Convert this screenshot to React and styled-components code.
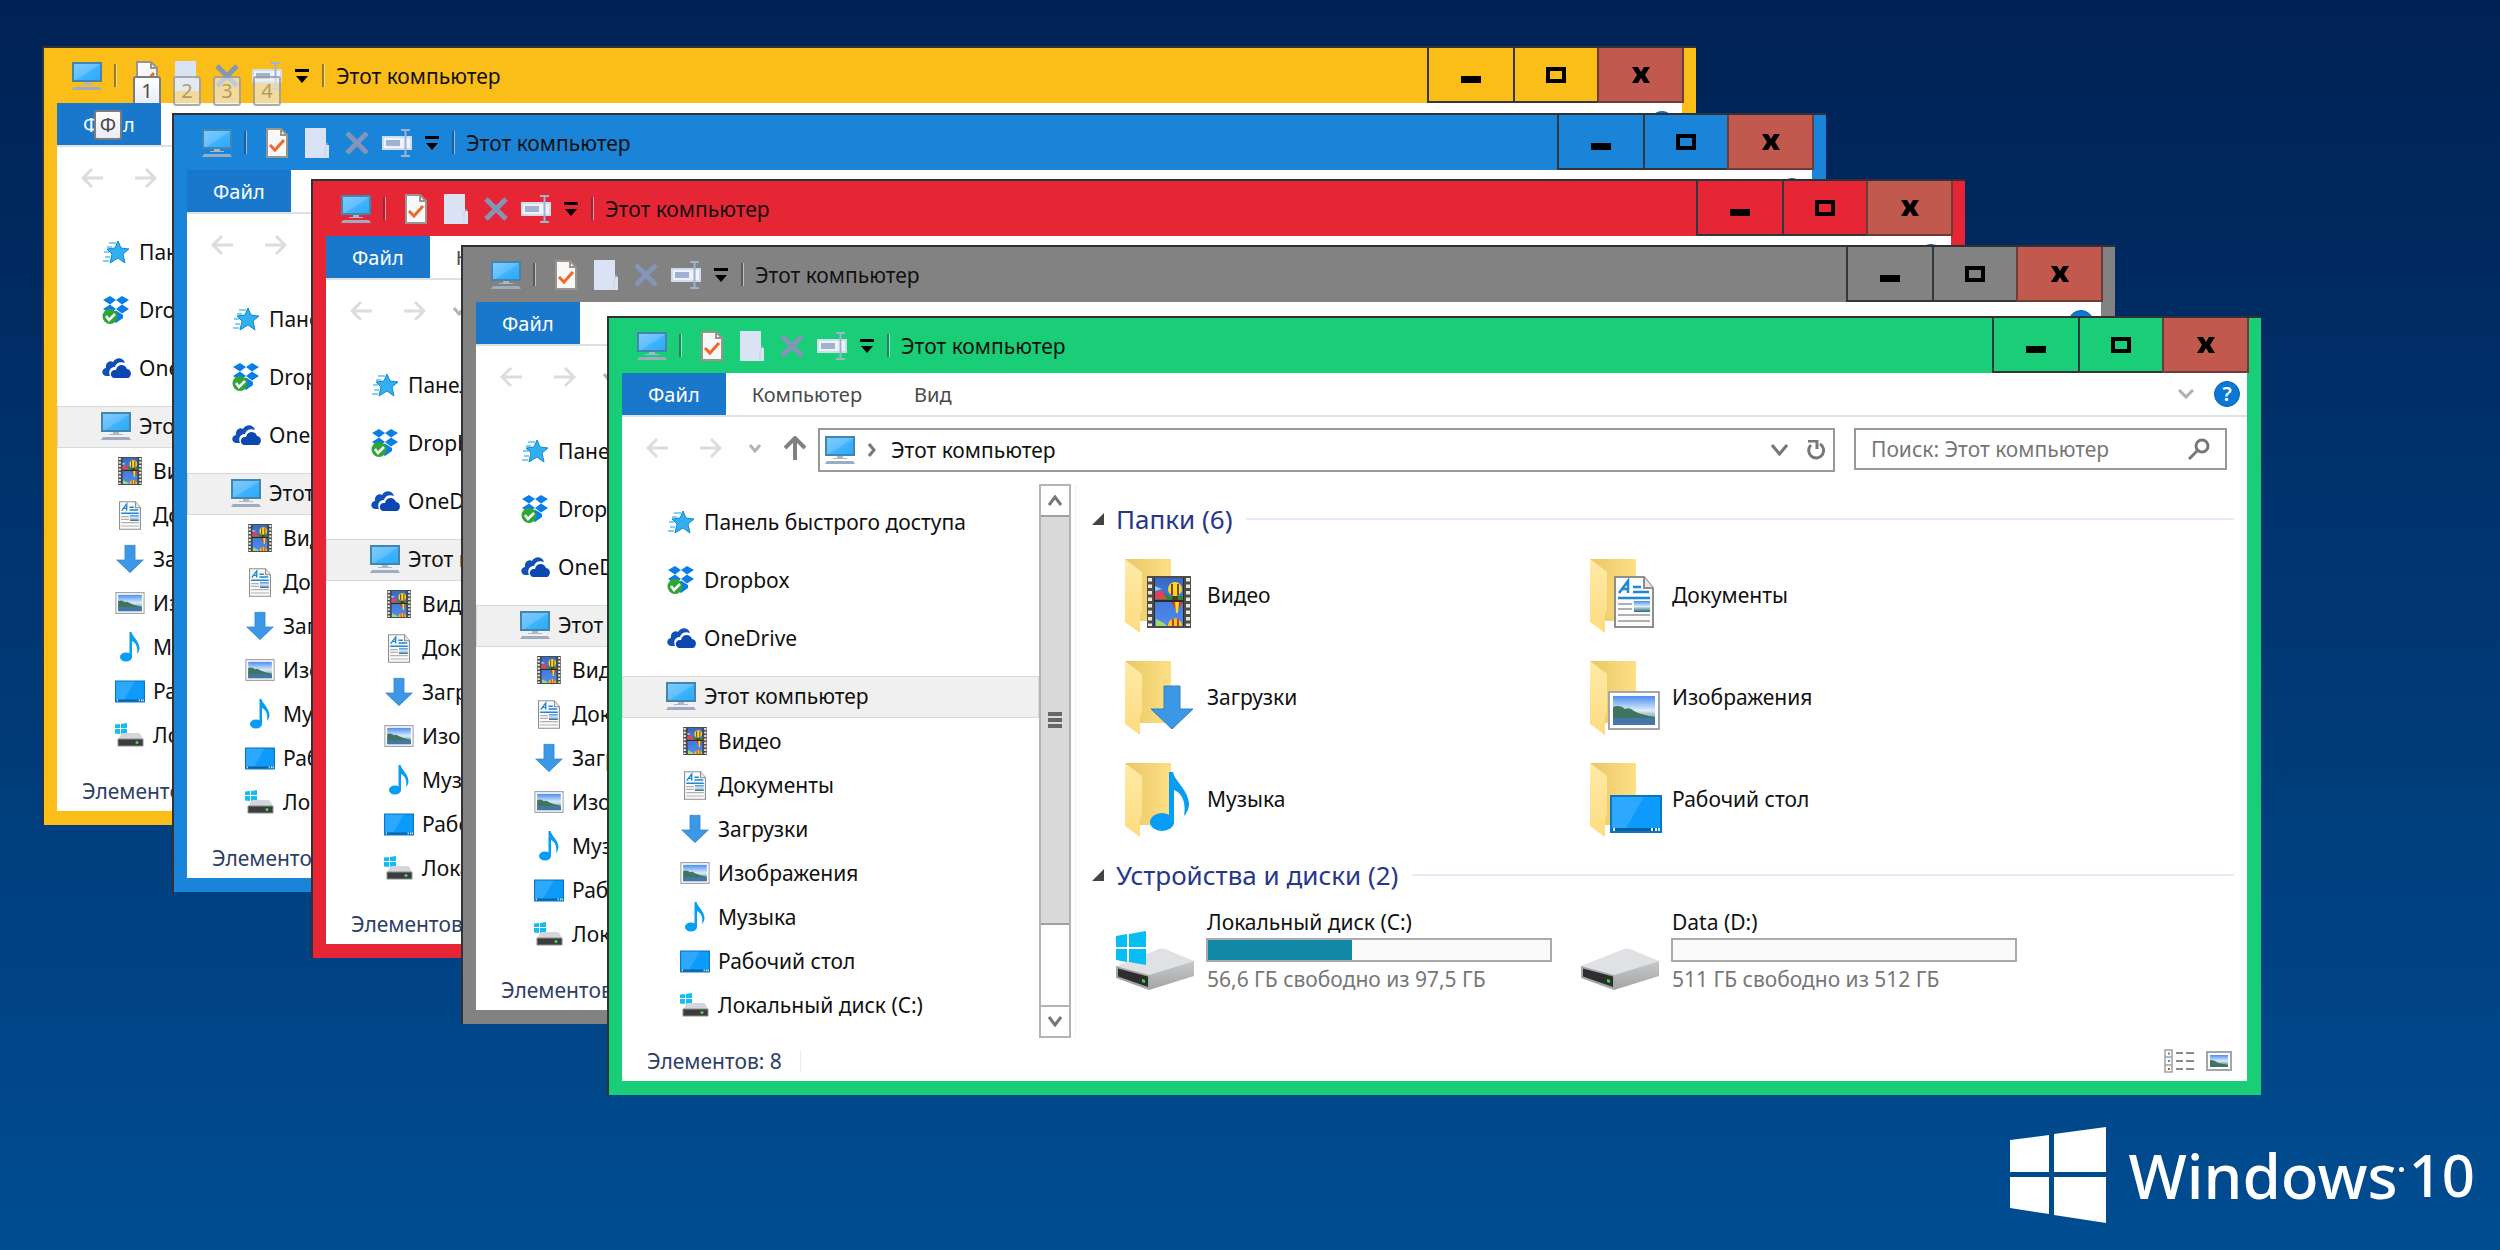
import styled, { createGlobalStyle, css } from "styled-components";

const GlobalStyle = createGlobalStyle`
  * {
    box-sizing: border-box;
  }
  body {
    margin: 0;
    background: #00235a;
  }
  button,
  input {
    font: inherit;
    color: inherit;
    margin: 0;
    padding: 0;
    border: 0;
    background: none;
  }
  a {
    color: inherit;
    text-decoration: none;
  }
  ul {
    margin: 0;
    padding: 0;
    list-style: none;
  }
  svg {
    display: block;
    flex: none;
  }
`;

const Desktop = styled.main`
  position: relative;
  min-height: 100vh;
  overflow: hidden;
  display: flex;
  flex-direction: column;
  justify-content: flex-end;
  align-items: flex-end;
  padding: 0 25px 27px;
  background: linear-gradient(#002154, #004d92);
  font-family: "Noto Sans", "Open Sans", sans-serif;
  font-size: 21px;
  line-height: 28px;
  color: #111111;
`;

const Defs = styled.svg`
  position: absolute;
`;

const Brand = styled.div`
  display: flex;
  align-items: center;
  color: #ffffff;
`;

const BrandName = styled.span`
  position: relative;
  margin-left: 22px;
  font-size: 62px;
  line-height: 84px;
  font-weight: 500;
  &::after {
    content: "";
    position: absolute;
    right: -6px;
    top: 34px;
    width: 5px;
    height: 5px;
    border-radius: 50%;
    background: #ffffff;
  }
`;

const BrandNumber = styled.span`
  margin-left: 11px;
  font-size: 58px;
  line-height: 84px;
  font-weight: 500;
`;

/* windows */

const WindowFrame = styled.section`
  position: absolute;
  left: ${(p) => p.$left}px;
  right: ${(p) => p.$right}px;
  top: ${(p) => p.$top}px;
  padding: 0 14px 14px 13px;
  border-top: 2px solid #2f3136;
  border-left: 2px solid #2f3136;
  background: ${(p) => p.$color};
`;

const TitleBar = styled.header`
  display: flex;
  align-items: center;
  height: 55px;
  padding-left: 15px;
`;

const Separator = styled.span`
  width: 3px;
  height: 23px;
  margin: 0 ${(p) => (p.$end ? 11 : 10)}px 0 ${(p) => (p.$end ? 5 : 12)}px;
  border-left: 2px solid rgba(50, 50, 70, 0.5);
  border-right: 1px solid rgba(255, 255, 255, 0.5);
`;

const QuickButton = styled.button`
  position: relative;
  display: flex;
  justify-content: center;
  align-items: center;
  width: ${(p) => (p.$small ? 30 : 40)}px;
  height: 32px;
`;

const KeyTip = styled.kbd`
  position: absolute;
  left: ${(p) => p.$left}px;
  top: ${(p) => p.$top}px;
  width: 28px;
  height: 30px;
  border: 2px solid #7c7c80;
  border-radius: 3px;
  background: linear-gradient(#ffffff, #e6ebf5);
  font-family: inherit;
  font-size: 20px;
  line-height: 26px;
  text-align: center;
  color: #4a4a4a;
  ${(p) =>
    p.$dim &&
    css`
      border-color: rgba(124, 124, 128, 0.6);
      background: rgba(235, 238, 245, 0.6);
      color: #b59a5c;
    `}
`;

const Title = styled.h1`
  flex: 1;
  margin: 0;
  font-size: 21px;
  font-weight: 400;
`;

const CaptionButtons = styled.div`
  display: flex;
  align-self: stretch;
  margin-right: -2px;
`;

const CaptionButton = styled.button`
  display: flex;
  justify-content: center;
  align-items: center;
  width: ${(p) => p.$width}px;
  border: 0 solid #33363a;
  border-width: 0 0 2px 2px;
  background: transparent;
  ${(p) =>
    p.$close &&
    css`
      border-color: #6d3b3a;
      border-right-width: 2px;
      background: #c1594f;
    `}
`;

const Client = styled.div`
  background: #ffffff;
`;

const TabRow = styled.div`
  display: flex;
  align-items: center;
  height: 44px;
  padding-right: 7px;
  border-bottom: 2px solid #dfe0e2;
`;

const Tab = styled.button`
  position: relative;
  height: 42px;
  padding: 2px 26px 0;
  font-size: 20px;
  line-height: 28px;
  color: #4a4a4a;
  ${(p) =>
    p.$file &&
    css`
      color: #ffffff;
      background: #1a78cc;
    `}
`;

const RibbonTools = styled.div`
  display: flex;
  align-items: center;
  gap: 20px;
  margin-left: auto;
`;

const HelpButton = styled.button`
  width: 26px;
  height: 26px;
  border: 1px solid #0a5fae;
  border-radius: 50%;
  background: #0a78d7;
  color: #ffffff;
  font-size: 20px;
  line-height: 24px;
  font-weight: 600;
  text-align: center;
`;

const AddressRow = styled.div`
  display: flex;
  align-items: flex-start;
  min-height: 67px;
  padding: 11px 20px 12px 8px;
`;

const NavButton = styled.button`
  display: flex;
  justify-content: center;
  align-items: center;
  width: ${(p) => p.$width}px;
  height: 40px;
`;

const AddressBar = styled.div`
  display: flex;
  align-items: center;
  flex: 1;
  height: 44px;
  padding: 0 7px 0 5px;
  border: 2px solid #999999;
`;

const CrumbArrow = styled.svg`
  margin-left: 13px;
`;

const Crumb = styled.a`
  flex: 1;
  margin-left: 15px;
`;

const Refresh = styled.button`
  display: flex;
  margin-left: 18px;
`;

const SearchBox = styled.label`
  display: flex;
  align-items: center;
  width: 373px;
  height: 42px;
  margin-left: 19px;
  padding: 0 15px;
  border: 2px solid #999999;
`;

const SearchInput = styled.input`
  flex: 1;
  min-width: 0;
  outline: 0;
  &::placeholder {
    color: #777777;
    opacity: 1;
  }
`;

const Body = styled.div`
  display: grid;
  grid-template-columns: 417px 32px 1fr;
`;

const Tree = styled.ul`
  padding: 18px 0 10px;
`;

const TreeItem = styled.li`
  margin-bottom: ${(p) => (p.$child ? 0 : p.$selected ? 2 : 16)}px;
`;

const TreeLink = styled.a`
  display: flex;
  align-items: center;
  gap: 8px;
  height: ${(p) => (p.$child ? 44 : 42)}px;
  padding: 0 0 2px ${(p) => (p.$child ? 57 : 43)}px;
  border: 1px solid ${(p) => (p.$selected ? "#d9d9d9" : "transparent")};
  background: ${(p) => (p.$selected ? "#f0f0f0" : "transparent")};
`;

const TreeIcon = styled.span`
  display: flex;
  justify-content: center;
  width: 30px;
`;

const ScrollTrack = styled.div`
  display: flex;
  flex-direction: column;
  border: 2px solid #b4b4b4;
`;

const ScrollButton = styled.button`
  display: flex;
  justify-content: center;
  align-items: center;
  height: 29px;
`;

const ScrollThumb = styled.div`
  display: flex;
  flex-direction: column;
  justify-content: center;
  align-items: center;
  gap: 2px;
  flex: 412 0 0;
  border: solid #a0a0a0;
  border-width: 2px 0;
  background: #dadada;
`;

const Grip = styled.span`
  width: 14px;
  height: 4px;
  background: #666666;
`;

const ScrollSpace = styled.div`
  flex: 81 0 0;
  border-bottom: 2px solid #b4b4b4;
`;

const Content = styled.div`
  margin-left: 4px;
  padding: 18px 13px 0 16px;
  border-left: 1px solid #f3f3f3;
`;

const GroupTitle = styled.h2`
  display: flex;
  align-items: center;
  height: 36px;
  margin: 0 0 ${(p) => p.$below}px;
  padding-bottom: 2px;
  font-size: 26px;
  font-weight: 400;
  color: #26378c;
  &::after {
    content: "";
    flex: 1;
    height: 2px;
    margin-left: 14px;
    background: #e1ecf8;
  }
`;

const Toggle = styled.button`
  margin-right: 12px;
`;

const Tiles = styled.ul`
  display: grid;
  grid-template-columns: repeat(auto-fill, 465px);
  margin-bottom: 7px;
  padding-left: 24px;
`;

const FolderTile = styled.a`
  display: flex;
  align-items: center;
  gap: 8px;
  height: 102px;
`;

const TileName = styled.span`
  padding: 0 0 2px 1px;
`;

const DriveTile = styled.a`
  display: flex;
  align-items: flex-end;
  gap: 8px;
`;

const DriveInfo = styled.div`
  display: flex;
  flex-direction: column;
`;

const Capacity = styled.div`
  width: 346px;
  height: 24px;
  margin: 0 0 3px;
  border: 2px solid #aaaaaa;
  background: #fafafa;
`;

const CapacityFill = styled.div`
  height: 100%;
  background: #1088a6;
`;

const FreeSpace = styled.span`
  padding-left: 1px;
  color: #777777;
`;

const StatusBar = styled.footer`
  display: flex;
  align-items: center;
  height: 43px;
  padding: 2px 15px 0 25px;
  color: #2d4068;
`;

const StatusText = styled.span`
  padding-right: 18px;
  border-right: 1px solid #eeeeee;
  line-height: 22px;
`;

const ViewModes = styled.div`
  display: flex;
  align-items: center;
  gap: 12px;
  margin-left: auto;
`;

/* icons */

const Monitor = (props) => (
  <svg width="30" height="28" viewBox="0 0 30 28" {...props}>
    <rect x="1" y="1" width="28" height="18" fill="url(#screen)" stroke="#4385ad" strokeWidth="2" />
    <path d="M12 20h6v2H12zM8 22h14v1H8z" fill="#a9b8c6" />
    <path d="M2 25h26l2 3H0z" fill="#9dacc0" />
  </svg>
);

const CheckDoc = () => (
  <svg width="22" height="30" viewBox="0 0 22 30">
    <path d="M1 1h14l6 6v22H1z" fill="#f8f8fa" stroke="#9a948c" strokeWidth="2" />
    <path d="M15 1v6h6" fill="none" stroke="#9a948c" strokeWidth="2" />
    <path d="M4 17l5 5L18 12" fill="none" stroke="#f0682a" strokeWidth="3" />
  </svg>
);

const NewFolder = () => (
  <svg width="24" height="30" viewBox="0 0 24 30">
    <path d="M0 0h21v17h3v13H0z" fill="#dae3f3" />
    <path d="M20 29V19l2-2v-2" fill="none" stroke="#c2cfe4" strokeWidth="1" />
  </svg>
);

const Cross = () => (
  <svg width="24" height="24" viewBox="0 0 24 24">
    <path d="M2 2l20 20M22 2L2 22" stroke="#8395b8" strokeWidth="5" />
  </svg>
);

const Rename = () => (
  <svg width="30" height="28" viewBox="0 0 30 28">
    <path d="M1 8h28v12H1z" fill="#eef2fb" stroke="#cfdcf0" strokeWidth="2" />
    <path d="M4 11h14v6H4z" fill="#9fb2d2" />
    <path d="M19 1h9M19 27h9M23.500 1v26" stroke="#9fb2cf" strokeWidth="2" />
  </svg>
);

const MoreArrow = () => (
  <svg width="14" height="14" viewBox="0 0 14 14">
    <path d="M0 0h14v3H0zM1 7h12L7 14z" fill="#000000" />
  </svg>
);

const QuickStar = () => (
  <svg width="26" height="24" viewBox="0 0 26 24">
    <path
      d="M15 1l3 7 8 1-6 5 2 9-7-5-8 5 2-9-5-5 8-1z"
      fill="#32aef2"
      stroke="#1488cc"
      strokeWidth="1"
    />
    <path d="M6 3h7M4 7h5M1 12h5M2 17h5M0 21h6" stroke="#5cc0f5" strokeWidth="1.500" />
  </svg>
);

const Dropbox = () => (
  <svg width="28" height="28" viewBox="0 0 28 28">
    <path
      d="M8 0l6 4-6 4.500L1 4zM20 0l7 4-7 4.500L14 4zM1 13l7-4.500 6 4.500-6 4.500zM20 8.500l7 4.500-7 4.500-6-4.500zM8 19l6-4.500 7 4.500v3l-7 5-6-5z"
      fill="#0a7ee8"
    />
    <circle cx="8" cy="20.500" r="7.500" fill="#2fa534" />
    <path d="M4 20l3 4 6-6" fill="none" stroke="#ffffff" strokeWidth="2.500" />
  </svg>
);

const OneDrive = () => (
  <svg width="29" height="20" viewBox="0 0 29 20">
    <path
      d="M8 18H4C-1 17-1 11 4 10 3 5 8 2 11 4c3-5 10-5 12 1-5-2-9 0-10 4-5 0-7 5-5 9z"
      fill="#1150b4"
    />
    <path d="M12 20c-5-1-4-9 2-8 1-6 9-7 11-1 5 0 5 8 1 9z" fill="#0c48b0" />
  </svg>
);

const Film = (props) => (
  <svg width="24" height="28" viewBox="0 0 44 52" {...props}>
    <path d="M0 0h44v52H0z" fill="#4c4c4c" />
    <path d="M3 2v48M41 2v48" stroke="#ece7d4" strokeWidth="4" strokeDasharray="3.500 3" />
    <path d="M7 2h30v48H7z" fill="#2b2b2b" />
    <path d="M8 2h28v22H8zM8 26h28v24H8z" fill="url(#sky)" />
    <path d="M8 18q8-3 15 3l13-1v4H8z" fill="#2a8a3c" />
    <path d="M8 10l7 3-7 2z" fill="#8fd0f0" />
    <path d="M8 17l6-3 6 9H8z" fill="#e8405c" />
    <ellipse cx="28" cy="13" rx="7" ry="7" fill="#f5dc1c" />
    <path d="M25 8v11M31 8v11" stroke="#8a3c1c" strokeWidth="2" />
    <path d="M25 20h6v4h-6z" fill="#5c3a10" />
    <path d="M24 26h12l-5 8h-2z" fill="#c83c34" />
    <path d="M28 26h4l-1 11h-2z" fill="#f5dc1c" />
    <path d="M21 50c0-10 14-10 14 0z" fill="#f5c81c" />
    <path d="M26 43v7M31 43v7" stroke="#c83c34" strokeWidth="2" />
    <path d="M9 43l8 4 3 3H9z" fill="#a8d868" />
  </svg>
);

const TextDoc = (props) => (
  <svg width="22" height="29" viewBox="0 0 40 52" {...props}>
    <path d="M1 1h29l9 11v39H1z" fill="#fbfbfb" stroke="#8e8e8e" strokeWidth="2" />
    <path d="M30 1v11h9" fill="#e6e6e6" stroke="#8e8e8e" strokeWidth="2" />
    <path d="M5 17L14 5v12M8 13h7M19 11h8M19 16h16M4 22h32" fill="none" stroke="#1e88d0" strokeWidth="2.500" />
    <path d="M4 28h14M4 33h14M4 39h32M4 45h32" stroke="#b0b0b0" strokeWidth="2" />
    <path d="M20 25h16v11H20z" fill="url(#photo)" />
  </svg>
);

const DownArrow = (props) => (
  <svg width="28" height="30" viewBox="0 0 44 45" {...props}>
    <path d="M14 1h16v23h13L22 44 1 24h13z" fill="#3c97e4" stroke="#2d80c8" strokeWidth="1" />
  </svg>
);

const Picture = (props) => (
  <svg width="30" height="22" viewBox="0 0 52 39" {...props}>
    <path d="M1 1h50v37H1z" fill="#ffffff" stroke="#a3a5a8" strokeWidth="2" />
    <path d="M5 5h42v29H5z" fill="url(#photo)" />
    <path d="M5 16q7-3 12 2 5-2 9 2 8 4 21 6v2H5z" fill="#3f7460" />
    <path d="M5 27h42v7H5z" fill="#4377a8" />
  </svg>
);

const SmallPicture = () => (
  <svg width="26" height="20" viewBox="0 0 26 20">
    <path d="M1 1h24v18H1z" fill="#ffffff" stroke="#a3a5a8" strokeWidth="2" />
    <path d="M4 4h18v12H4z" fill="url(#photo)" />
    <path d="M4 9q5 0 8 3l10 2v2H4z" fill="#3f7460" />
  </svg>
);

const Note = (props) => (
  <svg width="20" height="30" viewBox="0 0 40 60" {...props}>
    <ellipse cx="12" cy="50" rx="12" ry="9" fill="#079cf5" />
    <path d="M19 0h4c2 10 15 17 16 32 0 4-2 9-5 12 2-10 0-22-10-26v33l-5-1z" fill="#079cf5" />
  </svg>
);

const DesktopIcon = (props) => (
  <svg width="30" height="23" viewBox="0 0 52 38" {...props}>
    <path d="M1 1h50v36H1z" fill="#0d9bfb" stroke="#0a76bd" strokeWidth="2" />
    <path d="M2 2h32L16 33H2z" fill="#2ca8ff" />
    <path d="M2 33h48v3H2z" fill="#0a5f9c" />
    <path d="M3 33h2v3H3zM41 33h2v3h-2zM45 33h2v3h-2zM48 33h2v3h-2z" fill="#e0f2ff" />
  </svg>
);

const SmallDisk = () => (
  <svg width="30" height="24" viewBox="0 0 30 24">
    <path d="M0 1.500l5-.5v4H0zM6 1l6-1v5H6zM0 6h5v5l-5-.5zM6 6h6v6l-6-1z" fill="#12bdf2" />
    <path d="M5 13q1-3 3-3h15q2 0 3 2l2 5H3z" fill="#d5d6d9" />
    <path d="M3 16h25v7H3z" fill="#3b3d3c" stroke="#8b8c8e" strokeWidth="1" />
    <circle cx="22" cy="19.500" r="1.500" fill="#3be04c" />
  </svg>
);

const Folder = ({ children }) => (
  <svg width="82" height="76" viewBox="0 0 82 76">
    <path d="M9 1h46v62H24z" fill="url(#folderBack)" />
    <path d="M9 1l17 13v38l-2 5v18L9 64z" fill="url(#folderFront)" />
    {children}
  </svg>
);

const Drive = ({ system }) => (
  <svg width="82" height="64" viewBox="0 0 82 64">
    <path d="M0 37L43 20q3-1 6 0l29 12L33 46z" fill="#e0e1e4" />
    <path d="M33 46l45-14v15L33 61z" fill="url(#driveSide)" />
    <path d="M0 37l33 9v15L0 49z" fill="#a4a5a7" />
    <path d="M2 39.500l30 8V58L2 47.500z" fill="#2d2f2e" />
    <path d="M26 50l3 1v3l-3-1z" fill="#3bd848" />
    {system && (
      <path d="M0 7l11-2v13H0zM13 5l17-3v16H13zM0 20h11v13L0 31zM13 20h17v16l-17-3z" fill="#06bdf4" />
    )}
  </svg>
);

const WindowsLogo = () => (
  <svg width="96" height="96" viewBox="0 0 96 96" fill="#ffffff">
    <path d="M0 13l39-5v37H0zM44 7l52-7v45H44zM0 50h39v37L0 81zM44 50h52v46l-52-8z" />
  </svg>
);

const Chevron = ({ width, height, color, up }) => (
  <svg width={width} height={height} viewBox={`0 0 ${width} ${height}`}>
    <path
      d={
        up
          ? `M1 ${height - 1}L${width / 2} 2L${width - 1} ${height - 1}`
          : `M1 1L${width / 2} ${height - 2}L${width - 1} 1`
      }
      fill="none"
      stroke={color}
      strokeWidth="3"
    />
  </svg>
);

const BackArrow = () => (
  <svg width="22" height="22" viewBox="0 0 22 22">
    <path d="M22 11H2M11 2L2 11l9 9" fill="none" stroke="#dcdcdc" strokeWidth="3" />
  </svg>
);

const ForwardArrow = () => (
  <svg width="22" height="22" viewBox="0 0 22 22">
    <path d="M0 11h20M11 2l9 9-9 9" fill="none" stroke="#dcdcdc" strokeWidth="3" />
  </svg>
);

const UpArrow = () => (
  <svg width="22" height="24" viewBox="0 0 22 24">
    <path d="M11 24V3M1 12L11 2l10 10" fill="none" stroke="#808080" strokeWidth="4" />
  </svg>
);

const Triangle = () => (
  <svg width="12" height="12" viewBox="0 0 12 12">
    <path d="M12 0v12H0z" fill="#444444" />
  </svg>
);

const treeItems = [
  { name: "Панель быстрого доступа", icon: <QuickStar /> },
  { name: "Dropbox", icon: <Dropbox /> },
  { name: "OneDrive", icon: <OneDrive /> },
  { name: "Этот компьютер", icon: <Monitor />, selected: true },
  { name: "Видео", icon: <Film />, child: true },
  { name: "Документы", icon: <TextDoc />, child: true },
  { name: "Загрузки", icon: <DownArrow />, child: true },
  { name: "Изображения", icon: <Picture />, child: true },
  { name: "Музыка", icon: <Note />, child: true },
  { name: "Рабочий стол", icon: <DesktopIcon />, child: true },
  { name: "Локальный диск (C:)", icon: <SmallDisk />, child: true },
];

const folders = [
  { name: "Видео", icon: <Film x="31" y="18" width="44" height="52" /> },
  { name: "Документы", icon: <TextDoc x="33" y="18" width="40" height="52" /> },
  { name: "Загрузки", icon: <DownArrow x="34" y="25" width="44" height="45" /> },
  { name: "Изображения", icon: <Picture x="27" y="31" width="52" height="39" /> },
  { name: "Музыка", icon: <Note x="34" y="10" width="40" height="60" /> },
  { name: "Рабочий стол", icon: <DesktopIcon x="29" y="33" width="52" height="38" /> },
];

const drives = [
  { name: "Локальный диск (C:)", free: 56.6, total: 97.5, text: "56,6 ГБ свободно из 97,5 ГБ", system: true },
  { name: "Data (D:)", free: 511, total: 512, text: "511 ГБ свободно из 512 ГБ" },
];

const quickActions = [
  { label: "Свойства", icon: <CheckDoc /> },
  { label: "Новая папка", icon: <NewFolder /> },
  { label: "Удалить", icon: <Cross /> },
  { label: "Переименовать", icon: <Rename /> },
];

function AddressAndSearch() {
  return (
    <>
      <AddressBar>
        <Monitor />
        <CrumbArrow width="8" height="14">
          <path d="M1 1l5 6-5 6" fill="none" stroke="#777777" strokeWidth="3" />
        </CrumbArrow>
        <Crumb href="#computer">Этот компьютер</Crumb>
        <button aria-label="Предыдущие расположения">
          <Chevron width={17} height={12} color="#777777" />
        </button>
        <Refresh aria-label="Обновить">
          <svg width="20" height="20" viewBox="0 0 20 20">
            <path d="M14 4a7.500 7.500 0 1 1-9 1" fill="none" stroke="#777777" strokeWidth="3" />
            <path d="M2 1h9v8" fill="none" stroke="#777777" strokeWidth="3" />
          </svg>
        </Refresh>
      </AddressBar>
      <SearchBox>
        <SearchInput type="search" placeholder="Поиск: Этот компьютер" aria-label="Поиск" />
        <svg width="22" height="22" viewBox="0 0 22 22">
          <circle cx="14" cy="8" r="6" fill="none" stroke="#777777" strokeWidth="3" />
          <path d="M10 12l-9 9" stroke="#777777" strokeWidth="3" />
        </svg>
      </SearchBox>
    </>
  );
}

function FolderContent() {
  return (
    <Content>
      <GroupTitle $below={7}>
        <Toggle aria-label="Свернуть группу">
          <Triangle />
        </Toggle>
        Папки (6)
      </GroupTitle>
      <Tiles>
        {folders.map((folder) => (
          <li key={folder.name}>
            <FolderTile href="#folder">
              <Folder>{folder.icon}</Folder>
              <TileName>{folder.name}</TileName>
            </FolderTile>
          </li>
        ))}
      </Tiles>
      <GroupTitle $below={14}>
        <Toggle aria-label="Свернуть группу">
          <Triangle />
        </Toggle>
        Устройства и диски (2)
      </GroupTitle>
      <Tiles>
        {drives.map((drive) => (
          <li key={drive.name}>
            <DriveTile href="#drive">
              <Drive system={drive.system} />
              <DriveInfo>
                <TileName>{drive.name}</TileName>
                <Capacity>
                  <CapacityFill
                    style={{ width: `${Math.round(100 * (1 - drive.free / drive.total))}%` }}
                  />
                </Capacity>
                <FreeSpace>{drive.text}</FreeSpace>
              </DriveInfo>
            </DriveTile>
          </li>
        ))}
      </Tiles>
    </Content>
  );
}

// only the active window fills in its address bar and content pane
function ExplorerWindow({ left, right, top, color, keyTips, active }) {
  return (
    <WindowFrame $left={left} $right={right} $top={top} $color={color}>
      <TitleBar>
        <Monitor />
        <Separator />
        {quickActions.map((action, i) => (
          <QuickButton key={action.label} aria-label={action.label}>
            {action.icon}
            {keyTips && (
              <KeyTip $left={6} $top={16} $dim={i > 0}>
                {i + 1}
              </KeyTip>
            )}
          </QuickButton>
        ))}
        <QuickButton $small aria-label="Настройка панели">
          <MoreArrow />
        </QuickButton>
        <Separator $end />
        <Title>Этот компьютер</Title>
        <CaptionButtons>
          <CaptionButton $width={86} aria-label="Свернуть">
            <svg width="20" height="16">
              <path d="M0 9h20v7H0z" />
            </svg>
          </CaptionButton>
          <CaptionButton $width={84} aria-label="Развернуть">
            <svg width="20" height="16">
              <path d="M2 2h16v12H2z" fill="none" stroke="#000000" strokeWidth="4" />
            </svg>
          </CaptionButton>
          <CaptionButton $width={87} $close aria-label="Закрыть">
            <svg width="18" height="16">
              <path d="M0 0h6l3 5 3-5h6l-5 8 5 8h-6l-3-5-3 5H0l5-8z" />
            </svg>
          </CaptionButton>
        </CaptionButtons>
      </TitleBar>
      <Client>
        <TabRow>
          <Tab $file>
            Файл
            {keyTips && (
              <KeyTip $left={37} $top={7}>
                Ф
              </KeyTip>
            )}
          </Tab>
          <Tab>Компьютер</Tab>
          {active && <Tab>Вид</Tab>}
          <RibbonTools>
            <button aria-label="Развернуть ленту">
              <Chevron width={16} height={10} color="#b0b0b0" />
            </button>
            <HelpButton aria-label="Справка">?</HelpButton>
          </RibbonTools>
        </TabRow>
        <AddressRow>
          <NavButton $width={54} aria-label="Назад">
            <BackArrow />
          </NavButton>
          <NavButton $width={54} aria-label="Вперёд">
            <ForwardArrow />
          </NavButton>
          <NavButton $width={34} aria-label="Последние расположения">
            <Chevron width={12} height={9} color="#b4b4b4" />
          </NavButton>
          <NavButton $width={46} aria-label="Вверх">
            <UpArrow />
          </NavButton>
          {active && <AddressAndSearch />}
        </AddressRow>
        <Body>
          <Tree>
            {treeItems.map((item) => (
              <TreeItem key={item.name} $child={item.child} $selected={item.selected}>
                <TreeLink href="#item" $child={item.child} $selected={item.selected}>
                  <TreeIcon>{item.icon}</TreeIcon>
                  {item.name}
                </TreeLink>
              </TreeItem>
            ))}
          </Tree>
          <ScrollTrack>
            <ScrollButton aria-label="Прокрутить вверх">
              <Chevron up width={14} height={11} color="#777777" />
            </ScrollButton>
            <ScrollThumb>
              <Grip />
              <Grip />
              <Grip />
            </ScrollThumb>
            <ScrollSpace />
            <ScrollButton aria-label="Прокрутить вниз">
              <Chevron width={14} height={11} color="#777777" />
            </ScrollButton>
          </ScrollTrack>
          {active && <FolderContent />}
        </Body>
        <StatusBar>
          <StatusText>Элементов: 8</StatusText>
          <ViewModes>
            <button aria-label="Таблица">
              <svg width="30" height="24" viewBox="0 0 30 24">
                <path d="M1 1h7v22H1zM1 8h7M1 16h7" fill="#ffffff" stroke="#a0a0a0" strokeWidth="1.500" />
                <path d="M4 3.500h2v2H4z" fill="#5a9a6a" />
                <path d="M4 11h2v2H4z" fill="#3c8ce0" />
                <path d="M4 19h2v2H4z" fill="#e04040" />
                <path d="M12 4h7M22 4h8M12 12h7M22 12h8M12 20h7M22 20h8" stroke="#8a8a8a" strokeWidth="2" />
              </svg>
            </button>
            <button aria-label="Крупные значки">
              <SmallPicture />
            </button>
          </ViewModes>
        </StatusBar>
      </Client>
    </WindowFrame>
  );
}

const windows = [
  { left: 42, right: 804, top: 46, color: "#fbbe18", keyTips: true },
  { left: 172, right: 674, top: 113, color: "#1a84d8" },
  { left: 311, right: 535, top: 179, color: "#e62635" },
  { left: 461, right: 385, top: 245, color: "#828282" },
  { left: 607, right: 239, top: 316, color: "#1ace77", active: true },
];

export default function App() {
  return (
    <Desktop>
      <GlobalStyle />
      <Defs width="0" height="0" aria-hidden="true">
        <linearGradient id="screen" x2="1" y2="1">
          <stop offset="0" stopColor="#7fcbff" />
          <stop offset="0.5" stopColor="#62c0ff" />
          <stop offset="0.55" stopColor="#3fb3fd" />
          <stop offset="1" stopColor="#2ba9fa" />
        </linearGradient>
        <linearGradient id="sky" x2="0" y2="1">
          <stop offset="0" stopColor="#3a68c4" />
          <stop offset="1" stopColor="#4f8cf0" />
        </linearGradient>
        <linearGradient id="photo" x2="0" y2="1">
          <stop offset="0" stopColor="#4c8ef0" />
          <stop offset="0.5" stopColor="#dcecf8" />
          <stop offset="0.7" stopColor="#8fb4b8" />
          <stop offset="1" stopColor="#2c5f8c" />
        </linearGradient>
        <linearGradient id="folderBack" x2="1" y2="0">
          <stop offset="0" stopColor="#eac765" />
          <stop offset="1" stopColor="#fddf85" />
        </linearGradient>
        <linearGradient id="folderFront" x2="0" y2="1">
          <stop offset="0" stopColor="#ffeaa8" />
          <stop offset="1" stopColor="#fddc80" />
        </linearGradient>
        <linearGradient id="driveSide" x2="0" y2="1">
          <stop offset="0" stopColor="#c8c9cb" />
          <stop offset="1" stopColor="#a2a3a5" />
        </linearGradient>
      </Defs>
      {windows.map((w) => (
        <ExplorerWindow key={w.color} {...w} />
      ))}
      <Brand>
        <WindowsLogo />
        <BrandName>Windows</BrandName>
        <BrandNumber>10</BrandNumber>
      </Brand>
    </Desktop>
  );
}
